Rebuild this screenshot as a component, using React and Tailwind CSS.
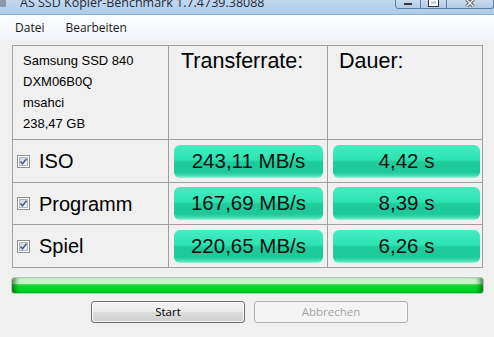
export default function App() {
  const rows = [
    { label: 'ISO', rate: '243,11 MB/s', time: '4,42 s' },
    { label: 'Programm', rate: '167,69 MB/s', time: '8,39 s' },
    { label: 'Spiel', rate: '220,65 MB/s', time: '6,26 s' },
  ];

  return (
    <div className="w-[494px] h-[337px] overflow-hidden bg-[#f0f0f0] flex flex-col font-['Liberation_Sans',Arial,sans-serif] text-black">
      {/* TITLE BAR (cut off at top) */}
      <div className="relative h-[15px] shrink-0 bg-[linear-gradient(to_bottom,#c2d8ee,#aecbea)] border-b border-[#8fb0d2] overflow-hidden">
        <div className="absolute left-0 top-[-4px] w-[6px] h-[11px] bg-[#8c9aa8] rounded-[1px]" />
        <span className="absolute left-[20px] top-[-5px] text-[12.5px] leading-[15px] text-[#1e2a38] font-['Open_Sans',sans-serif] whitespace-nowrap">
          AS SSD Kopier-Benchmark 1.7.4739.38088
        </span>
        <div className="absolute right-0 top-[-6px] flex">
          <div className="w-[26px] h-[15px] border border-[#5c7ea4] rounded-bl-[3px] bg-[linear-gradient(to_bottom,#d6e4f3,#b3cbe6)] flex items-end justify-center pb-[3px]">
            <div className="w-[8px] h-[2px] bg-white border border-[#333]" />
          </div>
          <div className="w-[26px] h-[15px] border-y border-r border-[#5c7ea4] bg-[linear-gradient(to_bottom,#d6e4f3,#b3cbe6)] flex items-end justify-center pb-[2px]">
            <div className="w-[9px] h-[7px] border-2 border-white outline outline-1 outline-[#333]" />
          </div>
          <div className="w-[47px] h-[15px] border-y border-r border-[#5c7ea4] rounded-br-[3px] bg-[linear-gradient(to_bottom,#d6e4f3,#b3cbe6)] flex items-end justify-center pb-[1px]">
            <svg width="10" height="8" viewBox="0 0 10 8">
              <path d="M1.5 0.5 L8.5 7.5 M8.5 0.5 L1.5 7.5" stroke="#333" strokeWidth="3" />
              <path d="M1.5 0.5 L8.5 7.5 M8.5 0.5 L1.5 7.5" stroke="#fff" strokeWidth="1.5" />
            </svg>
          </div>
        </div>
      </div>

      {/* MENU BAR */}
      <div className="h-[25px] shrink-0 flex items-center bg-[linear-gradient(to_bottom,#fdfeff,#f1f4f9)] text-[12px] font-['Open_Sans',sans-serif] text-[#1a1a1a]">
        <span className="ml-[15px]">Datei</span>
        <span className="ml-[21px]">Bearbeiten</span>
      </div>

      {/* TABLE */}
      <div className="mt-[5px] ml-[12px] w-[471px] border border-[#a0a0a0] bg-[#a0a0a0] grid grid-cols-[155px_158px_154px] grid-rows-[93px_42px_41px_42px] gap-px">
        <div className="bg-[#f0f0f0] pl-[10px] pt-[4px] text-[13px] leading-[21px]">
          <div>Samsung SSD 840</div>
          <div>DXM06B0Q</div>
          <div>msahci</div>
          <div>238,47 GB</div>
        </div>
        <div className="bg-[#f0f0f0] pl-[12px] pt-[2px] text-[21.5px] leading-[26px]">Transferrate:</div>
        <div className="bg-[#f0f0f0] pl-[11px] pt-[2px] text-[21.5px] leading-[26px]">Dauer:</div>

        {rows.map((r) => (
          <Row key={r.label} {...r} />
        ))}
      </div>

      {/* PROGRESS BAR */}
      <div className="mt-[9px] ml-[11px] w-[473px] h-[17px] rounded-[3px] border border-[#b6c7b6] bg-[linear-gradient(to_bottom,#dcf8dc_0%,#c0f1c2_38%,#1fd63a_45%,#06d42a_72%,#05c424_100%)] shadow-[inset_6px_0_5px_-3px_rgba(0,90,10,0.7),inset_-6px_0_5px_-3px_rgba(0,90,10,0.7)]" />

      {/* BUTTONS */}
      <div className="mt-[7px] ml-[91px] flex gap-[9px] text-[11.5px] font-['Open_Sans',sans-serif]">
        <div className="w-[154px] h-[22px] rounded-[3px] border border-[#707070] bg-[linear-gradient(to_bottom,#f3f3f3_0%,#ebebeb_48%,#dddddd_52%,#cfcfcf_100%)] shadow-[inset_0_0_0_1px_rgba(255,255,255,0.7)] flex items-center justify-center text-black">
          Start
        </div>
        <div className="w-[154px] h-[22px] rounded-[3px] border border-[#adb2b5] bg-[#f4f4f4] flex items-center justify-center text-[#a3a3a3]">
          Abbrechen
        </div>
      </div>
    </div>
  );
}

function Row({ label, rate, time }) {
  return (
    <>
      <div className="bg-[#f0f0f0] flex items-center pl-[4px]">
        <Check />
        <span className="ml-[9px] text-[20px] leading-none">{label}</span>
      </div>
      <div className="bg-[#f0f0f0] flex items-center pl-[5px] pr-[4px]">
        <Pill text={rate} />
      </div>
      <div className="bg-[#f0f0f0] flex items-center pl-[5px] pr-[2px]">
        <Pill text={time} />
      </div>
    </>
  );
}

function Pill({ text }) {
  return (
    <div className="w-full h-[33px] rounded-[6px] bg-[linear-gradient(to_bottom,#45edc0_0%,#2ce3b1_45%,#1dcb9b_52%,#1cc999_82%,#3fdcb0_92%,#9af3da_100%)] flex items-center justify-center text-[20.5px] text-[#111]">
      {text}
    </div>
  );
}

function Check() {
  return (
    <svg width="13" height="13" viewBox="0 0 13 13">
      <defs>
        <linearGradient id="cbg" x1="0" y1="0" x2="1" y2="1">
          <stop offset="0" stopColor="#cfd3da" />
          <stop offset="1" stopColor="#f6f7f9" />
        </linearGradient>
      </defs>
      <rect x="0.5" y="0.5" width="12" height="12" fill="#fff" stroke="#8e8f8f" />
      <rect x="2.5" y="2.5" width="8" height="8" fill="url(#cbg)" stroke="#b0b5bd" />
      <path d="M3.5 6.5 L5.5 8.8 L9.5 3.8" fill="none" stroke="#4a5c8f" strokeWidth="1.6" />
    </svg>
  );
}
